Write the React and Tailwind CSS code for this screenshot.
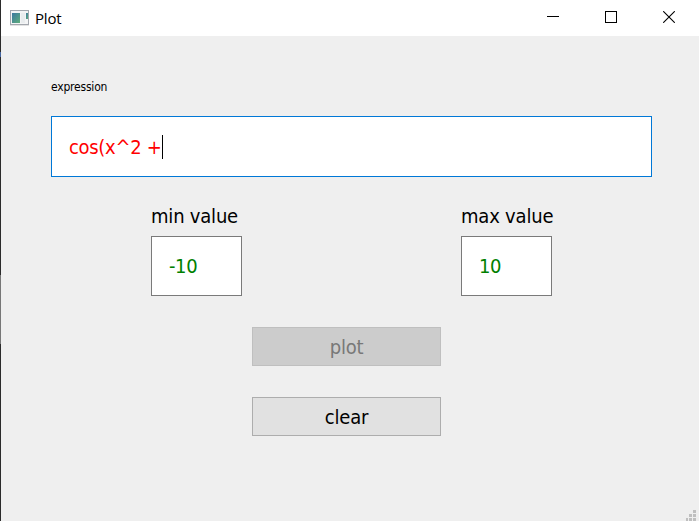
const uiFont = "font-['DejaVu_Sans_Condensed','DejaVu_Sans',sans-serif] [font-stretch:condensed]";

function AppIcon() {
  return (
    <svg width="19" height="16" viewBox="0 0 19 16" shapeRendering="crispEdges">
      <defs>
        <linearGradient id="pane" x1="0" y1="0" x2="1" y2="1">
          <stop offset="0" stopColor="#3c78a0" />
          <stop offset="1" stopColor="#5fae7c" />
        </linearGradient>
      </defs>
      <rect x="0" y="0" width="19" height="15" fill="#a3a7ae" />
      <rect x="0" y="15" width="19" height="1" fill="#e3e3e3" />
      <rect x="1" y="1" width="17" height="13" fill="#f3f4f5" />
      <rect x="2" y="3" width="8" height="10" fill="url(#pane)" />
      <rect x="11" y="3" width="4" height="10" fill="#e9ecee" />
      <rect x="16" y="3" width="2" height="6" fill="url(#pane)" />
    </svg>
  );
}

function TitleBar() {
  return (
    <header className="flex h-9 items-center bg-white">
      <div className="ml-[9px] flex items-center">
        <AppIcon />
        <span className="ml-[6px] font-['Open_Sans','Noto_Sans',sans-serif] text-[15px] leading-5 tracking-[-0.2px] text-black">
          Plot
        </span>
      </div>
      <div className="mr-[24px] ml-auto flex h-full items-start gap-[46px] pt-[11px]">
        <svg width="12" height="12" viewBox="0 0 12 12" shapeRendering="crispEdges">
          <rect x="0" y="5" width="12" height="1" />
        </svg>
        <svg width="12" height="12" viewBox="0 0 12 12" fill="none" stroke="#000">
          <rect x=".5" y=".5" width="11" height="11" />
        </svg>
        <svg width="12" height="12" viewBox="0 0 12 12" stroke="#000" strokeWidth="1.1">
          <path d="M.2.2l11.6 11.6M11.8.2L.2 11.8" />
        </svg>
      </div>
    </header>
  );
}

function ValueField({ label, value }) {
  return (
    <div className="w-[91px]">
      <div className="h-[30px] text-[20px] leading-[20px] tracking-[-0.2px] whitespace-nowrap">{label}</div>
      <div className="flex h-[60px] items-center border border-[#7a7a7a] bg-white pl-[17px] text-[20px] tracking-[-0.4px] text-[#008000]">
        {value}
      </div>
    </div>
  );
}

export default function App() {
  return (
    <div className="flex h-[521px] w-[699px] overflow-hidden bg-[#efefef]">
      <div className="flex w-px shrink-0 flex-col bg-[#2b2b2b]">
        <div className="mt-[52px] h-[5px] bg-[#4565a0]" />
        <div className="mt-[218px] h-[69px] bg-[#777777]" />
      </div>
      <div className="flex flex-1 flex-col">
        <TitleBar />
        <main className={`flex flex-1 flex-col pl-[50px] text-black ${uiFont}`}>
          <div className="mt-[43px] h-[37px] text-[12px] leading-[17px] tracking-[-0.2px]">expression</div>
          <div className="flex h-[61px] w-[601px] items-center border border-[#0078d7] bg-white pl-[17px] text-[20px] tracking-[-0.3px] text-[#ff0000]">
            <span className="whitespace-pre">cos(x^2 +</span>
            <span className="h-6 w-px bg-black" />
          </div>
          <div className="mt-[29px] ml-[100px] flex gap-[219px]">
            <ValueField label="min value" value="-10" />
            <ValueField label="max value" value="10" />
          </div>
          <div className="mt-[31px] ml-[201px] flex w-[189px] flex-col gap-[31px] text-[20px] tracking-[-0.2px]">
            <button disabled className="h-[39px] border border-[#bfbfbf] bg-[#cccccc] text-[#787878]">
              plot
            </button>
            <button className="h-[39px] border border-[#adadad] bg-[#e1e1e1] text-black">clear</button>
          </div>
          <svg className="mt-auto mr-[3px] ml-auto" width="10" height="11" viewBox="0 0 10 11" fill="#bfbfbf" shapeRendering="crispEdges">
            <path d="M7 0h3v3H7zM3 4h3v3H3zM7 4h3v3H7zM0 8h2v3H0zM3 8h3v3H3zM7 8h3v3H7z" />
          </svg>
        </main>
      </div>
    </div>
  );
}
